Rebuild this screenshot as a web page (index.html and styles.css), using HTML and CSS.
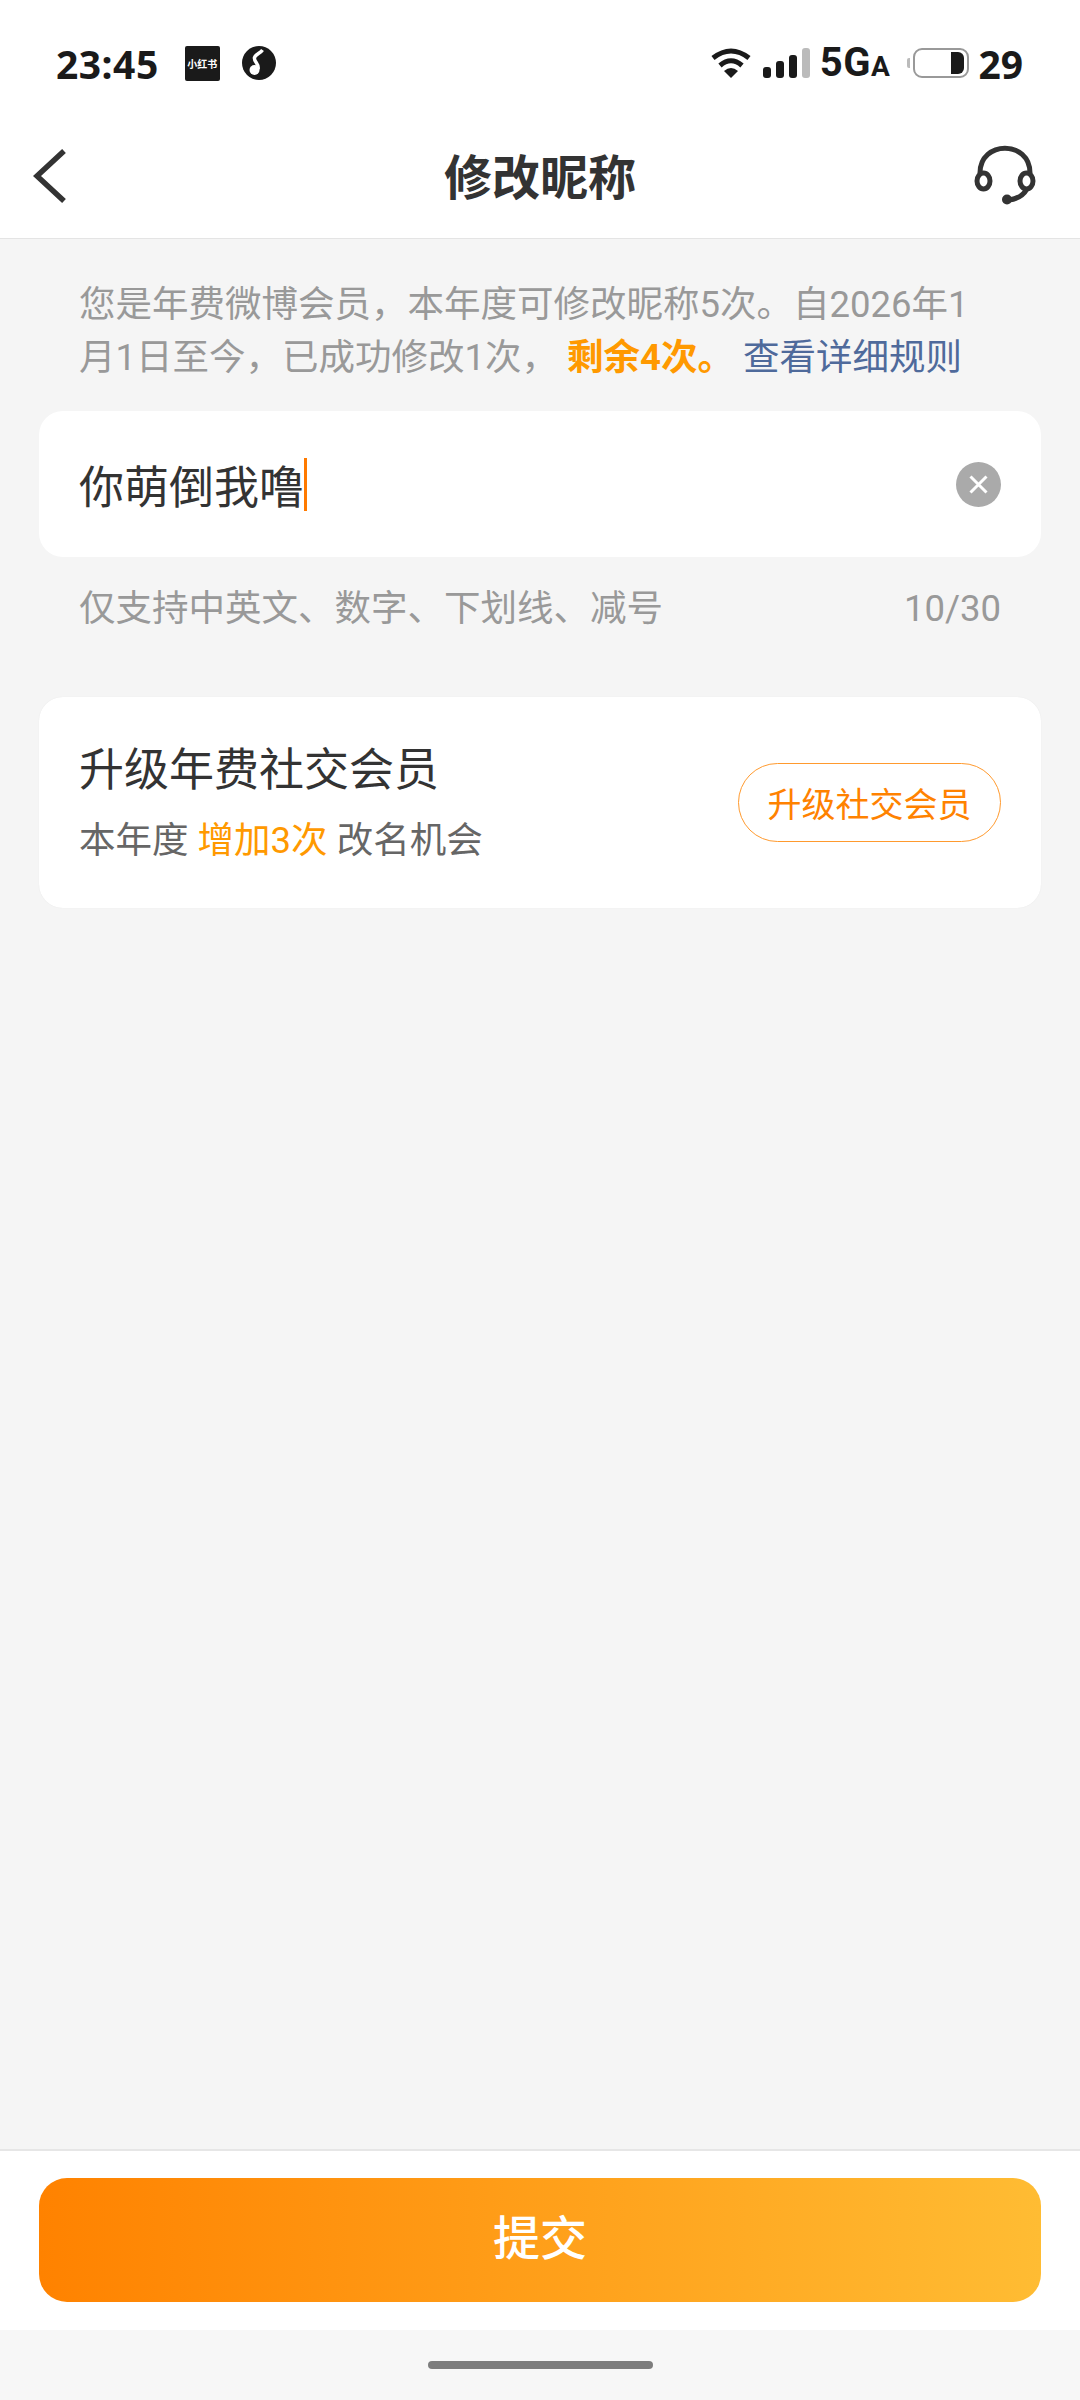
FILE: index.html
```html
<!DOCTYPE html>
<html lang="zh-CN">
<head>
    <meta charset="UTF-8">
    <meta name="viewport" content="width=device-width, initial-scale=1.0">
    <title>修改昵称</title>
    <link rel="stylesheet" href="styles.css">
</head>
<body>
    <div class="status-bar">
        <div class="status-left">
            <span class="time">23:45</span>
            <span class="app-badge">小红书</span>
            <svg class="music-icon" width="34" height="34" viewBox="0 0 34 34">
                <circle cx="17" cy="17" r="17" fill="#1a1a1a"/>
                <circle cx="12.500" cy="24" r="5" fill="#fff"/>
                <path d="M16 23 C17.500 18 11.500 15.500 12.500 11.500 C13.500 8 18 7.500 20.500 4" fill="none" stroke="#fff" stroke-width="3.500"/>
            </svg>
        </div>
        <div class="status-right">
            <svg class="wifi-icon" width="40" height="30" viewBox="0 0 40 30">
                <path d="M2 10 Q20 -4 38 10" fill="none" stroke="#1a1a1a" stroke-width="5"/>
                <path d="M9 17.500 Q20 8 31 17.500" fill="none" stroke="#1a1a1a" stroke-width="5"/>
                <path d="M13 23 Q20 17 27 23 L20 30Z" fill="#1a1a1a"/>
            </svg>
            <div class="signal">
                <span class="bar bar-1"></span>
                <span class="bar bar-2"></span>
                <span class="bar bar-3"></span>
                <span class="bar bar-4"></span>
            </div>
            <span class="network">5G<small>A</small></span>
            <span class="battery-nub"></span>
            <div class="battery"><span class="battery-level"></span></div>
            <span class="battery-num">29</span>
        </div>
    </div>

    <div class="nav-bar">
        <svg class="back-icon" width="34" height="56" viewBox="0 0 34 56">
            <path d="M31 3 L4 28 L31 53" fill="none" stroke="#333" stroke-width="5.500"/>
        </svg>
        <h1 class="nav-title">修改昵称</h1>
        <svg class="service-icon" width="62" height="62" viewBox="0 0 62 62">
            <path d="M6 30 C6 -3 56 -3 56 30" fill="none" stroke="#333" stroke-width="5"/>
            <ellipse cx="9.500" cy="38" rx="6.500" ry="8" fill="none" stroke="#333" stroke-width="5"/>
            <ellipse cx="52.500" cy="38" rx="6.500" ry="8" fill="none" stroke="#333" stroke-width="5"/>
            <path d="M53 46 C49 53 43 56 35 57" fill="none" stroke="#333" stroke-width="5"/>
            <circle cx="33" cy="56.500" r="5" fill="#333"/>
        </svg>
    </div>

    <main class="content">
        <div class="notice">
            <div>您是年费微博会员，本年度可修改昵称5次。自2026年1</div>
            <div class="notice-line">
                <span>月1日至今，已成功修改1次，</span>
                <strong class="remain">剩余4次。</strong>
                <a class="rule-link">查看详细规则</a>
            </div>
        </div>

        <div class="input-card">
            <div class="input-text">你萌倒我噜<span class="caret"></span></div>
            <svg class="clear-icon" width="45" height="45" viewBox="0 0 45 45">
                <circle cx="22.500" cy="22.500" r="22.500" fill="#aaa"/>
                <path d="M14.500 14.500 L30.500 30.500 M30.500 14.500 L14.500 30.500" stroke="#fff" stroke-width="3"/>
            </svg>
        </div>

        <div class="hint-row">
            <span>仅支持中英文、数字、下划线、减号</span>
            <span>10/30</span>
        </div>

        <div class="upgrade-card">
            <div class="upgrade-info">
                <div class="upgrade-title">升级年费社交会员</div>
                <div class="upgrade-desc">
                    <span>本年度</span>
                    <span class="highlight">增加3次</span>
                    <span>改名机会</span>
                </div>
            </div>
            <button class="upgrade-button">升级社交会员</button>
        </div>
    </main>

    <div class="footer">
        <button class="submit-button">提交</button>
    </div>

    <div class="home-area">
        <span class="home-bar"></span>
    </div>
</body>
</html>
```

FILE: styles.css
```css
* {
    box-sizing: border-box;
}

body {
    margin: 0;
    width: 1080px;
    height: 2400px;
    display: flex;
    flex-direction: column;
    background-color: #f5f5f5;
    font-family: Roboto, "Noto Sans CJK SC", sans-serif;
}

/* status bar */
.status-bar {
    height: 112px;
    padding: 14px 57px 0 56px;
    display: flex;
    justify-content: space-between;
    align-items: center;
    background-color: #fff;
    color: #1a1a1a;
}

.status-left, .status-right {
    display: flex;
    align-items: center;
}

.time {
    font-family: "Noto Sans", sans-serif;
    font-size: 39px;
    font-weight: 700;
    letter-spacing: 0.5px;
    margin-right: 26px;
}

.app-badge {
    width: 35px;
    height: 35px;
    margin-right: 22px;
    border-radius: 2px;
    background-color: #1a1a1a;
    color: #fff;
    font-family: "Noto Sans CJK SC", sans-serif;
    font-size: 10px;
    font-weight: 700;
    line-height: 35px;
    text-align: center;
    white-space: nowrap;
}

.wifi-icon {
    margin-right: 12px;
}

.signal {
    display: flex;
    align-items: flex-end;
    gap: 5px;
    height: 30px;
    margin-right: 10px;
}

.bar {
    width: 8px;
    border-radius: 3px;
    background-color: #1a1a1a;
}

.bar-1 { height: 11px; }
.bar-2 { height: 17px; }
.bar-3 { height: 23px; }
.bar-4 { height: 30px; background-color: #bbb; }

.network {
    font-size: 40px;
    font-weight: 700;
    line-height: 1;
    letter-spacing: 0.5px;
    margin-right: 17px;
}

.network small {
    font-size: 28px;
}

.battery-nub {
    width: 3px;
    height: 10px;
    margin-right: 3px;
    border-radius: 2px 0 0 2px;
    background-color: #bbb;
}

.battery {
    width: 56px;
    height: 30px;
    padding: 2px 3px;
    display: flex;
    justify-content: flex-end;
    border: 2.5px solid #999;
    border-radius: 9px;
}

.battery-level {
    width: 13px;
    border-radius: 0 6px 6px 0;
    background-color: #1a1a1a;
}

.battery-num {
    font-family: "Noto Sans", sans-serif;
    font-size: 39px;
    font-weight: 700;
    margin-left: 9px;
}

/* nav bar */
.nav-bar {
    height: 127px;
    padding: 0 44px 0 33px;
    display: flex;
    justify-content: space-between;
    align-items: center;
    position: relative;
    background-color: #fff;
    border-bottom: 1px solid #e4e4e4;
}

.back-icon {
    margin-top: 2px;
}

.service-icon {
    margin-bottom: 2px;
}

.nav-title {
    margin: 0 0 2px 0;
    position: absolute;
    left: 0;
    right: 0;
    text-align: center;
    font-size: 48px;
    font-weight: 700;
    color: #333;
}

/* content */
.content {
    flex: 1;
    padding: 0 39px 0 39px;
}

.notice {
    margin: 39px 0 0 0;
    padding: 0 40px;
    font-size: 36.5px;
    line-height: 53px;
    color: #999;
}

.remain {
    color: #ff9900;
    font-weight: 700;
}

.rule-link {
    color: #4f6a9b;
}

.input-card {
    height: 146px;
    margin-top: 27px;
    padding: 0 40px;
    display: flex;
    justify-content: space-between;
    align-items: center;
    background-color: #fff;
    border-radius: 24px;
}

.input-text {
    display: flex;
    align-items: center;
    font-size: 45px;
    color: #333;
}

.caret {
    width: 3px;
    height: 53px;
    background-color: #ff7a00;
}

.hint-row {
    margin-top: 25px;
    padding: 0 40px;
    display: flex;
    justify-content: space-between;
    font-size: 36.5px;
    line-height: 53px;
    color: #999;
}

.upgrade-card {
    height: 211px;
    margin-top: 62px;
    padding: 0 40px;
    display: flex;
    justify-content: space-between;
    align-items: center;
    background-color: #fff;
    border-radius: 24px;
    box-shadow: 0 0 1px #e2e2e2;
}

.upgrade-title {
    font-size: 45px;
    line-height: 60px;
    color: #333;
}

.upgrade-desc {
    margin-top: 16px;
    font-size: 36.5px;
    line-height: 48px;
    color: #666;
}

.highlight {
    color: #ff9900;
}

.upgrade-button {
    width: 263px;
    height: 79px;
    padding: 0;
    background-color: #fff;
    border: 1px solid #ff9a2e;
    border-radius: 40px;
    color: #ff8200;
    font-family: inherit;
    font-size: 34px;
}

/* footer */
.footer {
    height: 181px;
    padding: 27px 39px 0 39px;
    background-color: #fff;
    border-top: 2px solid #e6e6e6;
}

.submit-button {
    width: 100%;
    height: 124px;
    padding: 0 0 12px 0;
    background: linear-gradient(90deg, #ff8200, #ffbc33);
    border: none;
    border-radius: 28px;
    color: #fff;
    font-family: inherit;
    font-size: 47px;
    font-weight: 500;
}

.home-area {
    height: 70px;
    padding-top: 31px;
    display: flex;
    justify-content: center;
    background-color: #f7f7f7;
}

.home-bar {
    width: 225px;
    height: 8px;
    border-radius: 4px;
    background-color: #7d7d7d;
}
```
